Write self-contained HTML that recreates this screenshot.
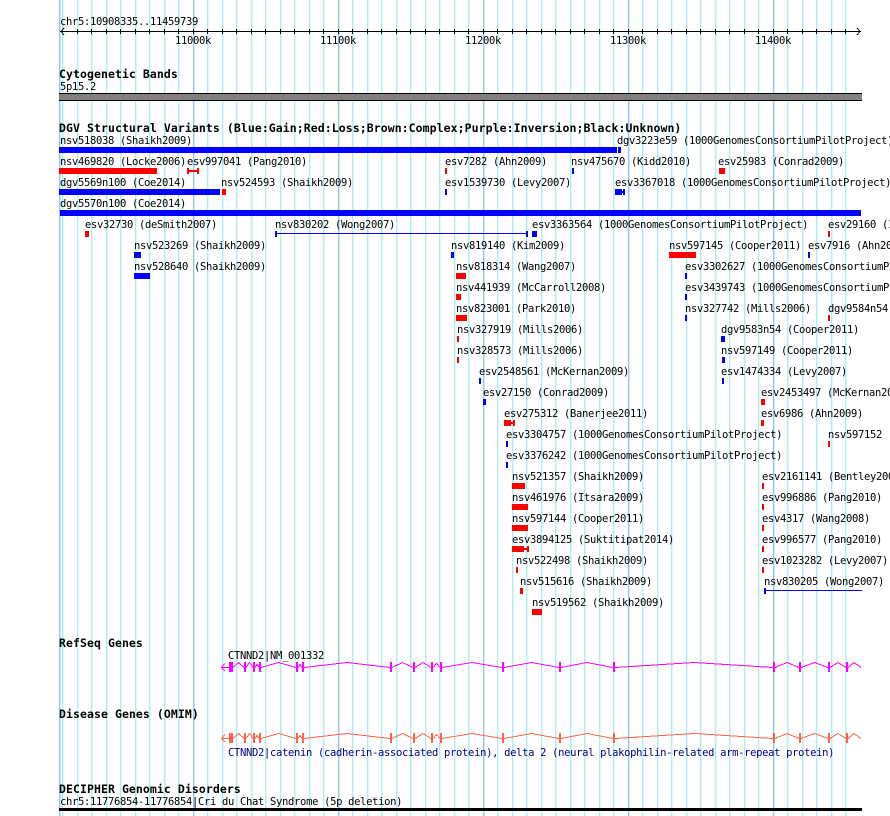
<!DOCTYPE html>
<html><head><meta charset="utf-8"><style>
html,body{margin:0;padding:0;background:#fff;width:890px;height:816px;overflow:hidden}
svg{display:block}
text{font-family:"DejaVu Sans Mono","Liberation Mono",monospace;font-size:10.5px;letter-spacing:-.32px;fill:#000;white-space:pre}
text.b{font-weight:bold;font-size:11.5px;letter-spacing:.07px}
.n text{fill:#000080}
</style></head><body>
<svg width="890" height="816" viewBox="0 0 890 816" xmlns="http://www.w3.org/2000/svg" shape-rendering="crispEdges">
<rect width="890" height="816" fill="#fff"/>
<g transform="translate(.17 0)" shape-rendering="auto">
<path fill="none" stroke="#b2ecf0" stroke-width="1.5" d="M62.5 0V816M77.5 0V816M91.5 0V816M106.5 0V816M120.5 0V816M135.5 0V816M149.5 0V816M164.5 0V816M178.5 0V816M207.5 0V816M222.5 0V816M236.5 0V816M251.5 0V816M265.5 0V816M280.5 0V816M294.5 0V816M309.5 0V816M323.5 0V816M352.5 0V816M367.5 0V816M381.5 0V816M396.5 0V816M410.5 0V816M425.5 0V816M439.5 0V816M454.5 0V816M468.5 0V816M497.5 0V816M512.5 0V816M526.5 0V816M541.5 0V816M555.5 0V816M570.5 0V816M584.5 0V816M599.5 0V816M613.5 0V816M642.5 0V816M657.5 0V816M671.5 0V816M686.5 0V816M700.5 0V816M715.5 0V816M729.5 0V816M744.5 0V816M758.5 0V816M787.5 0V816M802.5 0V816M816.5 0V816M831.5 0V816M845.5 0V816"/>
<path fill="none" stroke="#96c8ee" stroke-width="1.5" d="M59.5 0V816M193.5 0V816M338.5 0V816M483.5 0V816M628.5 0V816M773.5 0V816"/>
</g>

<!-- axis -->
<path fill="none" stroke="#000" d="M60 31.5H861M77.5 29V34M91.5 29V34M106.5 29V34M120.5 29V34M135.5 29V34M149.5 29V34M164.5 29V34M178.5 29V34M193.5 29V34M207.5 29V34M222.5 29V34M236.5 29V34M251.5 29V34M265.5 29V34M280.5 29V34M294.5 29V34M309.5 29V34M323.5 29V34M338.5 29V34M352.5 29V34M367.5 29V34M381.5 29V34M396.5 29V34M410.5 29V34M425.5 29V34M439.5 29V34M454.5 29V34M468.5 29V34M483.5 29V34M497.5 29V34M512.5 29V34M526.5 29V34M541.5 29V34M555.5 29V34M570.5 29V34M584.5 29V34M599.5 29V34M613.5 29V34M628.5 29V34M642.5 29V34M657.5 29V34M671.5 29V34M686.5 29V34M700.5 29V34M715.5 29V34M729.5 29V34M744.5 29V34M758.5 29V34M773.5 29V34M787.5 29V34M802.5 29V34M816.5 29V34M831.5 29V34M845.5 29V34M64 28L61 31.5L64 35M857 28L860 31.5L857 35"/>
<text x="60" y="25">chr5:10908335..11459739</text>
<text x="175" y="44">11000k</text><text x="320" y="44">11100k</text><text x="465" y="44">11200k</text><text x="610" y="44">11300k</text><text x="755" y="44">11400k</text>

<!-- cytogenetic band -->
<text class="b" x="59" y="78">Cytogenetic Bands</text>
<text x="60" y="90">5p15.2</text>
<rect x="59" y="93" width="803" height="8" fill="#000"/>
<rect x="59" y="94" width="803" height="6" fill="#808080"/>

<text class="b" x="59" y="132">DGV Structural Variants (Blue:Gain;Red:Loss;Brown:Complex;Purple:Inversion;Black:Unknown)</text>

<!-- DGV labels -->
<g>
<text x="60" y="144">nsv518038 (Shaikh2009)</text><text x="617" y="144">dgv3223e59 (1000GenomesConsortiumPilotProject)</text>
<text x="60" y="165">nsv469820 (Locke2006)</text><text x="187" y="165">esv997041 (Pang2010)</text><text x="445" y="165">esv7282 (Ahn2009)</text><text x="571" y="165">nsv475670 (Kidd2010)</text><text x="718" y="165">esv25983 (Conrad2009)</text>
<text x="60" y="186">dgv5569n100 (Coe2014)</text><text x="221" y="186">nsv524593 (Shaikh2009)</text><text x="445" y="186">esv1539730 (Levy2007)</text><text x="615" y="186">esv3367018 (1000GenomesConsortiumPilotProject)</text>
<text x="60" y="207">dgv5570n100 (Coe2014)</text>
<text x="85" y="228">esv32730 (deSmith2007)</text><text x="275" y="228">nsv830202 (Wong2007)</text><text x="532" y="228">esv3363564 (1000GenomesConsortiumPilotProject)</text><text x="828" y="228">esv29160 (1000GenomesConsortiumPilotProject)</text>
<text x="134" y="249">nsv523269 (Shaikh2009)</text><text x="451" y="249">nsv819140 (Kim2009)</text><text x="669" y="249">nsv597145 (Cooper2011)</text><text x="808" y="249">esv7916 (Ahn2009)</text>
<text x="134" y="270">nsv528640 (Shaikh2009)</text><text x="456" y="270">nsv818314 (Wang2007)</text><text x="685" y="270">esv3302627 (1000GenomesConsortiumPilotProject)</text>
<text x="456" y="291">nsv441939 (McCarroll2008)</text><text x="685" y="291">esv3439743 (1000GenomesConsortiumPilotProject)</text>
<text x="456" y="312">nsv823001 (Park2010)</text><text x="685" y="312">nsv327742 (Mills2006)</text><text x="828" y="312">dgv9584n54 (Cooper2011)</text>
<text x="457" y="333">nsv327919 (Mills2006)</text><text x="721" y="333">dgv9583n54 (Cooper2011)</text>
<text x="457" y="354">nsv328573 (Mills2006)</text><text x="721" y="354">nsv597149 (Cooper2011)</text>
<text x="479" y="375">esv2548561 (McKernan2009)</text><text x="721" y="375">esv1474334 (Levy2007)</text>
<text x="483" y="396">esv27150 (Conrad2009)</text><text x="761" y="396">esv2453497 (McKernan2009)</text>
<text x="504" y="417">esv275312 (Banerjee2011)</text><text x="761" y="417">esv6986 (Ahn2009)</text>
<text x="506" y="438">esv3304757 (1000GenomesConsortiumPilotProject)</text><text x="828" y="438">nsv597152 (Cooper2011)</text>
<text x="506" y="459">esv3376242 (1000GenomesConsortiumPilotProject)</text>
<text x="512" y="480">nsv521357 (Shaikh2009)</text><text x="762" y="480">esv2161141 (Bentley2008)</text>
<text x="512" y="501">nsv461976 (Itsara2009)</text><text x="762" y="501">esv996886 (Pang2010)</text>
<text x="512" y="522">nsv597144 (Cooper2011)</text><text x="762" y="522">esv4317 (Wang2008)</text>
<text x="512" y="543">esv3894125 (Suktitipat2014)</text><text x="762" y="543">esv996577 (Pang2010)</text>
<text x="516" y="564">nsv522498 (Shaikh2009)</text><text x="762" y="564">esv1023282 (Levy2007)</text>
<text x="520" y="585">nsv515616 (Shaikh2009)</text><text x="764" y="585">nsv830205 (Wong2007)</text>
<text x="532" y="606">nsv519562 (Shaikh2009)</text>
</g>

<!-- blue features -->
<g fill="#0000ff">
<rect x="59" y="147" width="558" height="6"/><rect x="618" y="147" width="3" height="6"/>
<rect x="572" y="168" width="2" height="6"/>
<rect x="59" y="189" width="161" height="6"/><rect x="445" y="189" width="2" height="6"/><rect x="615" y="189" width="7" height="6"/><rect x="623" y="189" width="2" height="6"/><rect x="622" y="191" width="1" height="2"/>
<rect x="60" y="210" width="801" height="6"/>
<rect x="275" y="231" width="2" height="6"/><rect x="277" y="233" width="249" height="1"/><rect x="526" y="231" width="2" height="6"/><rect x="532" y="231" width="5" height="6"/>
<rect x="134" y="252" width="7" height="6"/><rect x="451" y="252" width="3" height="6"/><rect x="808" y="252" width="2" height="6"/>
<rect x="134" y="273" width="16" height="6"/><rect x="685" y="273" width="2" height="6"/>
<rect x="685" y="294" width="2" height="6"/>
<rect x="685" y="315" width="2" height="6"/>
<rect x="721" y="336" width="4" height="6"/>
<rect x="722" y="357" width="3" height="6"/>
<rect x="479" y="378" width="2" height="6"/><rect x="722" y="378" width="2" height="6"/>
<rect x="483" y="399" width="3" height="6"/>
<rect x="506" y="441" width="2" height="6"/>
<rect x="506" y="462" width="2" height="6"/>
<rect x="764" y="588" width="2" height="6"/><rect x="766" y="590" width="96" height="1"/>
</g>
<!-- red features -->
<g fill="#ff0000">
<rect x="59" y="168" width="98" height="6"/><rect x="187" y="168" width="2" height="6"/><rect x="189" y="170" width="9" height="2"/><rect x="197" y="168" width="2" height="6"/><rect x="445" y="168" width="2" height="6"/><rect x="719" y="168" width="6" height="6"/>
<rect x="222" y="189" width="4" height="6"/>
<rect x="85" y="231" width="4" height="6"/><rect x="828" y="231" width="2" height="6"/>
<rect x="669" y="252" width="27" height="6"/>
<rect x="456" y="273" width="10" height="6"/>
<rect x="456" y="294" width="5" height="6"/>
<rect x="456" y="315" width="11" height="6"/><rect x="828" y="315" width="2" height="6"/>
<rect x="457" y="336" width="2" height="6"/>
<rect x="457" y="357" width="2" height="6"/>
<rect x="761" y="399" width="4" height="6"/>
<rect x="504" y="420" width="7" height="6"/><rect x="511" y="422" width="2" height="2"/><rect x="513" y="420" width="2" height="6"/><rect x="761" y="420" width="3" height="6"/>
<rect x="828" y="441" width="2" height="6"/>
<rect x="512" y="483" width="13" height="6"/><rect x="762" y="483" width="2" height="6"/>
<rect x="512" y="504" width="16" height="6"/><rect x="762" y="504" width="2" height="6"/>
<rect x="512" y="525" width="16" height="6"/><rect x="762" y="525" width="2" height="6"/>
<rect x="512" y="546" width="12" height="6"/><rect x="524" y="548" width="3" height="2"/><rect x="527" y="546" width="2" height="6"/><rect x="762" y="546" width="2" height="6"/>
<rect x="516" y="567" width="2" height="6"/><rect x="762" y="567" width="2" height="6"/>
<rect x="520" y="588" width="3" height="6"/>
<rect x="532" y="609" width="10" height="6"/>
</g>

<!-- RefSeq -->
<text class="b" x="59" y="647">RefSeq Genes</text>
<text x="228" y="659">CTNND2|NM_001332</text>
<g>
<path fill="none" stroke="#ff00ff" d="M225 663.5L221.5 667.5L225 671M222 667.5H230M233 667.5L238.5 662.5L244 667.5M246 667.5L249.5 662.5L253 667.5M255 667.5L257 664.5L259 667.5M261 667.5L278.5 662.5L296 667.5M298 667.5L300 664.5L302 667.5M304 667.5L347 662.5L390 667.5M392 667.5L402.5 662.5L413 667.5M415 667.5L423 662.5L431 667.5M433 667.5L436.5 663.5L440 667.5M442 667.5L472 662.5L502 667.5M504 667.5L531.5 662.5L559 667.5M561 667.5L587 662.5L613 667.5M615 667.5L694 662.5L773 667.5M775 667.5L787 662.5L799 667.5M801 667.5L814.5 662.5L828 667.5M830 667.5L838 662.5L846 667.5M848 667.5L854 662.5L861 667.5"/>
<path fill="#ff00ff" d="M229 662h4v10h-4zM244 662h2v10h-2zM253 662h2v10h-2zM259 662h2v10h-2zM296 662h2v10h-2zM302 662h2v10h-2zM390 662h2v10h-2zM413 662h2v10h-2zM431 662h2v10h-2zM440 662h2v10h-2zM502 662h2v10h-2zM559 662h2v10h-2zM613 662h2v10h-2zM773 662h2v10h-2zM799 662h2v10h-2zM828 662h2v10h-2zM846 662h2v10h-2z"/>
</g>

<!-- OMIM -->
<text class="b" x="59" y="718">Disease Genes (OMIM)</text>
<g transform="translate(0,71)">
<path fill="none" stroke="#ff6347" d="M225 663.5L221.5 667.5L225 671M222 667.5H230M233 667.5L238.5 662.5L244 667.5M246 667.5L249.5 662.5L253 667.5M255 667.5L257 664.5L259 667.5M261 667.5L278.5 662.5L296 667.5M298 667.5L300 664.5L302 667.5M304 667.5L347 662.5L390 667.5M392 667.5L402.5 662.5L413 667.5M415 667.5L423 662.5L431 667.5M433 667.5L436.5 663.5L440 667.5M442 667.5L472 662.5L502 667.5M504 667.5L531.5 662.5L559 667.5M561 667.5L587 662.5L613 667.5M615 667.5L694 662.5L773 667.5M775 667.5L787 662.5L799 667.5M801 667.5L814.5 662.5L828 667.5M830 667.5L838 662.5L846 667.5M848 667.5L854 662.5L861 667.5"/>
<path fill="#ff6347" d="M229 662h4v10h-4zM244 662h2v10h-2zM253 662h2v10h-2zM259 662h2v10h-2zM296 662h2v10h-2zM302 662h2v10h-2zM390 662h2v10h-2zM413 662h2v10h-2zM431 662h2v10h-2zM440 662h2v10h-2zM502 662h2v10h-2zM559 662h2v10h-2zM613 662h2v10h-2zM773 662h2v10h-2zM799 662h2v10h-2zM828 662h2v10h-2zM846 662h2v10h-2z"/>
</g>
<g class="n"><text x="228" y="756">CTNND2|catenin (cadherin-associated protein), delta 2 (neural plakophilin-related arm-repeat protein)</text></g>

<!-- DECIPHER -->
<text class="b" x="59" y="793">DECIPHER Genomic Disorders</text>
<text x="60" y="805">chr5:11776854-11776854|Cri du Chat Syndrome (5p deletion)</text>
<rect x="59" y="808" width="803" height="3" fill="#000"/>
</svg>
</body></html>
